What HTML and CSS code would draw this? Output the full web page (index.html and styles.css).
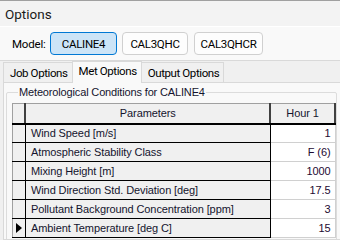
FILE: index.html
```html
<!DOCTYPE html>
<html lang="en">
<head>
    <meta charset="UTF-8">
    <title>Options</title>
    <link rel="stylesheet" href="styles.css">
</head>
<body>
    <div class="window">
        <div class="title">Options</div>

        <div class="model-bar">
            <span class="model-label">Model:</span>
            <button class="model-btn active">CALINE4</button>
            <button class="model-btn">CAL3QHC</button>
            <button class="model-btn wide">CAL3QHCR</button>
        </div>

        <div class="tabs">
            <div class="tab">Job Options</div>
            <div class="tab active">Met Options</div>
            <div class="tab">Output Options</div>
        </div>

        <div class="tab-page">
            <fieldset class="group">
                <legend>Meteorological Conditions for CALINE4</legend>
                <table class="grid">
                    <thead>
                        <tr>
                            <th class="row-head"></th>
                            <th class="param">Parameters</th>
                            <th class="hour">Hour 1</th>
                        </tr>
                    </thead>
                    <tbody>
                        <tr>
                            <td class="row-head"></td>
                            <td class="param">Wind Speed [m/s]</td>
                            <td class="hour">1</td>
                        </tr>
                        <tr>
                            <td class="row-head"></td>
                            <td class="param">Atmospheric Stability Class</td>
                            <td class="hour">F (6)</td>
                        </tr>
                        <tr>
                            <td class="row-head"></td>
                            <td class="param">Mixing Height [m]</td>
                            <td class="hour">1000</td>
                        </tr>
                        <tr>
                            <td class="row-head"></td>
                            <td class="param">Wind Direction Std. Deviation [deg]</td>
                            <td class="hour">17.5</td>
                        </tr>
                        <tr>
                            <td class="row-head"></td>
                            <td class="param">Pollutant Background Concentration [ppm]</td>
                            <td class="hour">3</td>
                        </tr>
                        <tr class="current">
                            <td class="row-head"><span class="pointer"></span></td>
                            <td class="param">Ambient Temperature [deg C]</td>
                            <td class="hour">15</td>
                        </tr>
                    </tbody>
                </table>
            </fieldset>
        </div>
    </div>
</body>
</html>
```

FILE: styles.css
```css
* {
    margin: 0;
    padding: 0;
    box-sizing: border-box;
}

body {
    width: 340px;
    height: 240px;
    overflow: hidden;
    background: #f0f0f0;
    font-family: Roboto, 'Liberation Sans', sans-serif;
    color: #000;
}

.window {
    border-top: 1px solid #a0a0a0;
}

.title {
    height: 25px;
    padding: 5px 0 0 5px;
    font-size: 13.5px;
    color: #1a1a1a;
    background: #f3f3f3;
}

.model-bar {
    height: 35px;
    display: flex;
    align-items: center;
    padding: 0 0 0 12px;
    background: #f9f9f9;
    border-top: 1px solid #ffffff;
    border-bottom: 1px solid #d9d9d9;
}

.model-label {
    width: 38px;
    font-size: 11.5px;
    letter-spacing: -0.2px;
}

.model-btn {
    width: 66px;
    height: 23px;
    margin-right: 6px;
    font-family: Roboto, 'Liberation Sans', sans-serif;
    font-size: 11.5px;
    letter-spacing: -0.3px;
    color: #000;
    background: #fdfdfd;
    border: 1px solid #d0d0d0;
    border-radius: 4px;
}

.model-btn.active {
    width: 67px;
    margin-right: 5px;
    background: #cce4f7;
    border-color: #0078d4;
}

.model-btn.wide {
    width: 69px;
}

.tabs {
    height: 21px;
    display: flex;
    align-items: flex-end;
    padding-left: 3px;
}

.tab {
    height: 20px;
    padding: 3px 4px 0 6px;
    font-size: 11.5px;
    letter-spacing: -0.4px;
    background: #f0f0f0;
    border: 1px solid #d9d9d9;
    border-bottom: none;
}

.tab.active {
    height: 22px;
    padding-top: 2px;
    background: #f9f9f9;
    margin-bottom: -1px;
    position: relative;
}

.tab + .tab {
    margin-left: -1px;
}

.tab-page {
    height: 158px;
    margin-left: 3px;
    background: #f9f9f9;
    border: 1px solid #d9d9d9;
    border-right: none;
    padding: 3px 0 0 2px;
    overflow: hidden;
}

.group {
    border: 1px solid #dcdcdc;
    border-radius: 2px;
    height: 170px;
    width: 331px;
    padding: 0 0 0 5px;
}

.group legend {
    margin-left: 6px;
    padding: 0 1px;
    font-family: 'Liberation Sans', sans-serif;
    font-size: 11px;
    letter-spacing: -0.15px;
    color: #14142e;
}

.grid {
    margin-top: 5px;
    border-collapse: collapse;
    font-family: 'Liberation Sans', sans-serif;
    font-size: 11px;
    letter-spacing: -0.1px;
    border-top: 1px solid #a0a0a0;
    border-left: 1px solid #a0a0a0;
}

.grid th {
    height: 20px;
    font-weight: normal;
    color: #14142e;
    background: #f0f0f0;
    border-bottom: 2px solid #000;
    border-right: 2px solid #404040;
}

.grid td {
    height: 19px;
    color: #14142e;
    border-bottom: 1px solid #000;
    border-right: 1px solid #000;
    background: #f0f0f0;
}

.grid .row-head {
    width: 13px;
}

.grid .param {
    width: 245px;
}

.grid td.param {
    padding-left: 5px;
}

.grid .hour {
    width: 65px;
}

.grid td.hour {
    text-align: right;
    padding-right: 4px;
    background: #fff;
    color: #1e0a32;
    border-bottom-color: #d0d0d0;
    border-right-color: #d0d0d0;
}

.pointer {
    display: block;
    margin-left: 3px;
    width: 0;
    height: 0;
    border-top: 5px solid transparent;
    border-bottom: 5px solid transparent;
    border-left: 6px solid #000;
}
```
